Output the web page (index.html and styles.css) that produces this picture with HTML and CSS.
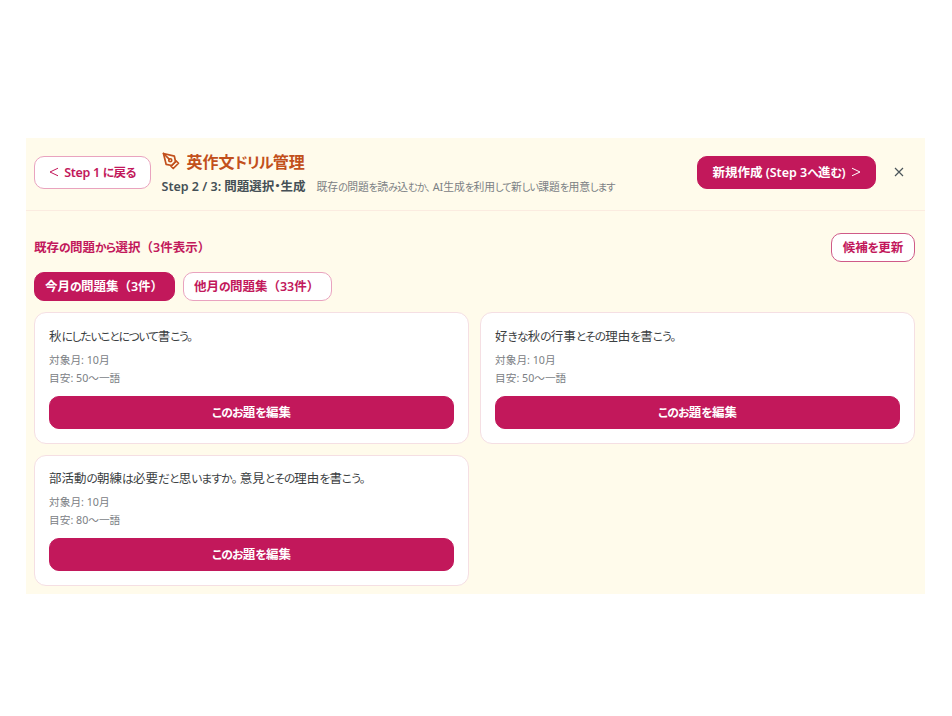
FILE: index.html
```html
<!DOCTYPE html>
<html lang="ja">
<head>
    <meta charset="UTF-8">
    <meta name="viewport" content="width=device-width, initial-scale=1.0">
    <title>英作文ドリル管理</title>
    <link rel="stylesheet" href="styles.css">
</head>
<body>
    <div class="drill-panel">
        <header class="panel-header">
            <button class="btn btn-back"><svg class="chevron" viewBox="0 0 10 10"><path d="M9 1.200 1 5l8 3.800"/></svg><span>Step 1 <i>に</i>戻<i>る</i></span></button>
            <div class="heading">
                <h1>
                    <svg class="pen-icon" viewBox="0 0 24 24"><path d="m12 19 7-7 3 3-7 7-3-3z"/><path d="m18 13-1.500-7.500L2 2l3.500 14.500L13 18l5-5z"/><path d="m2 2 7.586 7.586"/><circle cx="11" cy="11" r="2"/></svg>
                    <span>英作文<i>ドリル</i>管理</span>
                </h1>
                <div class="step-row">
                    <span class="step-name">Step 2 / 3: 問題選択・生成</span>
                    <span class="step-note">既存<i>の</i>問題<i>を</i>読<i>み</i>込<i>むか、</i> AI生成<i>を</i>利用<i>して</i>新<i>しい</i>課題<i>を</i>用意<i>します</i></span>
                </div>
            </div>
            <button class="btn btn-next"><span>新規作成 (Step 3<i>へ</i>進<i>む</i>)</span><svg class="chevron" viewBox="0 0 10 10"><path d="M1 1.200 9 5 1 8.800"/></svg></button>
            <button class="btn-close" aria-label="閉じる"><svg viewBox="0 0 10 10"><path d="m1 1 8 8M9 1 1 9"/></svg></button>
        </header>
        <main class="panel-body">
            <div class="list-head">
                <h2>既存<i>の</i>問題<i>から</i>選択<span class="wide">（3件表示）</span></h2>
                <button class="btn btn-refresh"><span>候補<i>を</i>更新</span></button>
            </div>
            <div class="tabs">
                <button class="btn tab active"><span>今月<i>の</i>問題集<span class="wide">（3件）</span></span></button>
                <button class="btn tab"><span>他月<i>の</i>問題集<span class="wide">（33件）</span></span></button>
            </div>
            <div class="cards">
                <div class="card">
                    <h3 class="tight">秋<i>にしたいことについて</i>書<i>こう。</i></h3>
                    <p>対象月: 10月</p>
                    <p>目安: 50～一語</p>
                    <button class="btn btn-edit"><span><i>このお</i>題<i>を</i>編集</span></button>
                </div>
                <div class="card">
                    <h3>好<i>きな</i>秋<i>の</i>行事<i>とその</i>理由<i>を</i>書<i>こう。</i></h3>
                    <p>対象月: 10月</p>
                    <p>目安: 50～一語</p>
                    <button class="btn btn-edit"><span><i>このお</i>題<i>を</i>編集</span></button>
                </div>
                <div class="card">
                    <h3>部活動<i>の</i>朝練<i>は</i>必要<i>だと</i>思<i>いますか。</i> 意見<i>とその</i>理由<i>を</i>書<i>こう。</i></h3>
                    <p>対象月: 10月</p>
                    <p>目安: 80～一語</p>
                    <button class="btn btn-edit"><span><i>このお</i>題<i>を</i>編集</span></button>
                </div>
            </div>
        </main>
    </div>
</body>
</html>
```
FILE: styles.css
```css
* {
    box-sizing: border-box;
}
body {
    margin: 0;
    padding: 138px 27px 0 25.5px;
    background: #ffffff;
    font-family: "Noto Sans", "Noto Sans CJK JP", sans-serif;
    font-feature-settings: "palt";
}
h1, h2, h3, p {
    margin: 0;
}
/* kana set tighter than kanji */
i {
    font-style: normal;
    font-size: 0.94em;
    letter-spacing: -0.06em;
}
svg {
    fill: none;
    stroke: currentColor;
    stroke-width: 1;
    flex: none;
}
.drill-panel {
    height: 456px;
    background: #fffbeb;
}
.panel-header {
    display: flex;
    align-items: center;
    height: 73px;
    padding: 0 21px 4px 8.5px;
    border-bottom: 1px solid #fbebe0;
}
.btn {
    display: flex;
    align-items: center;
    justify-content: center;
    flex: none;
    padding: 0;
    border: 1px solid #e9a3bf;
    border-radius: 10px;
    background: #ffffff;
    color: #c2185b;
    font: inherit;
    font-size: 12.5px;
    font-weight: 600;
    line-height: 18px;
    white-space: nowrap;
}
.chevron {
    width: 10px;
    height: 10px;
}
.btn-back {
    width: 117px;
    height: 33px;
    gap: 5px;
    letter-spacing: -0.3px;
}
.heading {
    flex: 1;
    margin-left: 10.5px;
}
h1 {
    display: flex;
    align-items: center;
    gap: 7px;
    height: 24px;
    margin-top: 3px;
    color: #c2501c;
    font-size: 16px;
    font-weight: 700;
    white-space: nowrap;
}
.pen-icon {
    width: 18px;
    height: 18px;
    stroke-width: 2.3;
    stroke-linecap: round;
    stroke-linejoin: round;
}
.step-row {
    display: flex;
    align-items: center;
    gap: 11px;
    height: 25px;
    white-space: nowrap;
}
.step-name {
    color: #455056;
    font-size: 12.5px;
    font-weight: 600;
}
.step-note {
    color: #7b8084;
    font-size: 10.8px;
}
.step-note i {
    letter-spacing: -0.08em;
}
.btn-next {
    width: 179px;
    height: 33px;
    gap: 5px;
    border-color: #c2185b;
    background: #c2185b;
    color: #ffffff;
}
.btn-close {
    display: flex;
    margin-left: 18px;
    padding: 0;
    border: 0;
    background: none;
    color: #4b555b;
}
.btn-close svg {
    width: 10px;
    height: 10px;
    stroke-width: 1.2;
}
.panel-body {
    padding: 22px 10px 0 8.5px;
}
.wide {
    font-feature-settings: normal;
}
.list-head {
    display: flex;
    align-items: center;
    justify-content: space-between;
    height: 29px;
}
h2 {
    margin-bottom: 3px;
    color: #c2185b;
    font-size: 12.5px;
    font-weight: 600;
}
.btn-refresh {
    width: 84px;
    height: 29px;
    border-color: #cf5a88;
}
.tabs {
    display: flex;
    gap: 8px;
    margin: 10px 0 11px;
}
.tab {
    justify-content: flex-start;
    width: 149px;
    height: 29px;
    padding-left: 10px;
}
.tab.active {
    width: 141px;
    border-color: #c2185b;
    background: #c2185b;
    color: #ffffff;
}
.cards {
    display: grid;
    grid-template-columns: 1fr 1fr;
    gap: 11px;
}
.card {
    height: 131.5px;
    padding: 13.5px 14px 0;
    border: 1px solid #f5dfe3;
    border-radius: 12px;
    background: #ffffff;
}
.card h3 {
    height: 18px;
    margin-bottom: 6px;
    color: #3b4042;
    font-size: 12.5px;
    font-weight: 400;
    line-height: 18px;
    white-space: nowrap;
}
.card h3 i {
    letter-spacing: -0.07em;
}
.card h3.tight i {
    letter-spacing: -0.1em;
}
.card p {
    color: #7b8084;
    font-size: 10.7px;
    line-height: 18px;
}
.btn-edit {
    width: 100%;
    height: 33px;
    margin-top: 9px;
    border-color: #c2185b;
    background: #c2185b;
    color: #ffffff;
}
```
